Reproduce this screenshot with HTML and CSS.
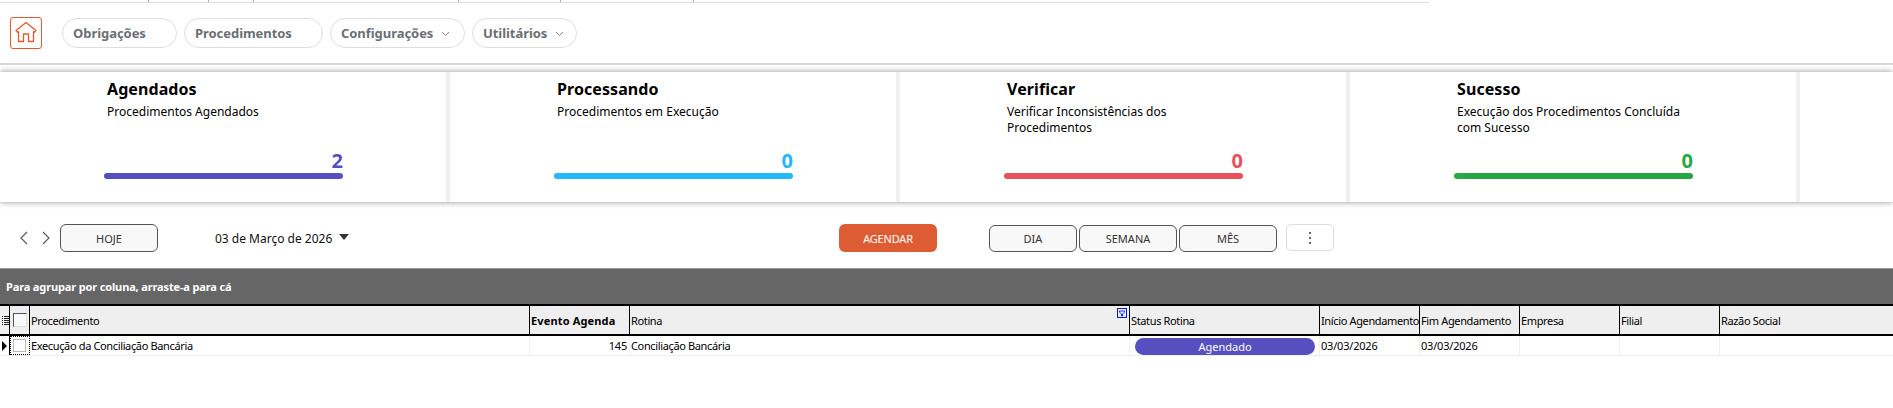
FILE: index.html
```html
<!DOCTYPE html>
<html lang="pt-BR">
<head>
<meta charset="utf-8">
<title>Procedimentos</title>
<link rel="stylesheet" href="styles.css">
</head>
<body>
<div class="page">
  <svg class="top-strip" width="1429" height="3" viewBox="0 0 1429 3">
    <path d="M0 2.5H1429" stroke="#dcdcdc"/>
    <path d="M148.5 0V2M208.5 0V2M253.5 0V2M458.5 0V2M560.5 0V2M693.5 0V2" stroke="#aaa"/>
  </svg>
  <header class="nav">
    <a class="home" href="#" aria-label="Início">
      <svg width="30" height="30" viewBox="0 0 30 30" fill="none" stroke="#e8582c" stroke-width="1.3" stroke-linejoin="round">
        <path d="M5 12.5 15 4.5l10 8-1.6 1.8-.9-.7V23.5h-5V16h-5v7.5h-5V13.6l-.9.7z"/>
      </svg>
    </a>
    <nav class="menu">
      <a class="pill pill-obr" href="#">Obrigações</a>
      <a class="pill pill-proc" href="#">Procedimentos</a>
      <a class="pill pill-conf" href="#">Configurações
        <svg class="caret" width="9" height="6" viewBox="0 0 9 6"><path d="M1 1l3.5 3.5L8 1" fill="none" stroke="#8a8a8a"/></svg></a>
      <a class="pill pill-util" href="#">Utilitários
        <svg class="caret" width="9" height="6" viewBox="0 0 9 6"><path d="M1 1l3.5 3.5L8 1" fill="none" stroke="#8a8a8a"/></svg></a>
    </nav>
  </header>

  <section class="cards">
    <article class="card">
      <div class="card-body">
        <h2 class="card-title">Agendados</h2>
        <p class="card-sub">Procedimentos Agendados</p>
        <div class="card-num num-purple">2</div>
        <div class="card-bar bar-purple"></div>
      </div>
    </article>
    <article class="card">
      <div class="card-body">
        <h2 class="card-title">Processando</h2>
        <p class="card-sub">Procedimentos em Execução</p>
        <div class="card-num num-blue">0</div>
        <div class="card-bar bar-blue"></div>
      </div>
    </article>
    <article class="card">
      <div class="card-body">
        <h2 class="card-title">Verificar</h2>
        <p class="card-sub">Verificar Inconsistências dos Procedimentos</p>
        <div class="card-num num-red">0</div>
        <div class="card-bar bar-red"></div>
      </div>
    </article>
    <article class="card">
      <div class="card-body">
        <h2 class="card-title">Sucesso</h2>
        <p class="card-sub">Execução dos Procedimentos Concluída com Sucesso</p>
        <div class="card-num num-green">0</div>
        <div class="card-bar bar-green"></div>
      </div>
    </article>
    <article class="card card-empty"></article>
  </section>

  <section class="toolbar">
    <div class="tb-left">
      <svg class="chev" width="10" height="14" viewBox="0 0 10 14"><path d="M8 1 2 7l6 6" fill="none" stroke="#555" stroke-width="1.1"/></svg>
      <svg class="chev chev-next" width="10" height="14" viewBox="0 0 10 14"><path d="M2 1l6 6-6 6" fill="none" stroke="#555" stroke-width="1.1"/></svg>
      <button class="btn btn-today">HOJE</button>
      <span class="date">03 de Março de 2026</span>
      <span class="date-arrow"></span>
    </div>
    <button class="btn-primary">AGENDAR</button>
    <div class="views">
      <button class="btn btn-dia">DIA</button>
      <button class="btn btn-view">SEMANA</button>
      <button class="btn btn-view">MÊS</button>
    </div>
    <button class="btn-more" aria-label="Mais"><i></i><i></i><i></i></button>
  </section>

  <section class="grid">
    <div class="group-band">Para agrupar por coluna, arraste-a para cá</div>
    <div class="row head">
      <div class="cell c-ind">
        <svg width="7" height="9" viewBox="0 0 7 9"><path d="M0 .5h1M2 .5h5M0 2.5h1M2 2.5h5M0 4.5h1M2 4.5h5M0 6.5h1M2 6.5h5M0 8.5h1M2 8.5h5" stroke="#222"/></svg>
      </div>
      <div class="cell c-chk"><span class="hcheck"></span></div>
      <div class="cell">Procedimento</div>
      <div class="cell strong">Evento Agenda</div>
      <div class="cell c-filter">Rotina
        <svg class="filter" width="10" height="10" viewBox="0 0 10 10"><rect x=".5" y=".5" width="9" height="9" fill="#e8ecff" stroke="#0018e8"/><path d="M2.5 3h5v1L5.5 6v2h-1V6l-2-2z" fill="#fff" stroke="#0018e8" stroke-width=".9"/></svg>
      </div>
      <div class="cell">Status Rotina</div>
      <div class="cell">Início Agendamento</div>
      <div class="cell">Fim Agendamento</div>
      <div class="cell">Empresa</div>
      <div class="cell">Filial</div>
      <div class="cell">Razão Social</div>
    </div>
    <div class="row data">
      <div class="cell c-ind"><span class="pointer"></span></div>
      <div class="cell c-chk focus"><span class="rcheck"></span></div>
      <div class="cell">Execução da Conciliação Bancária</div>
      <div class="cell num">145</div>
      <div class="cell">Conciliação Bancária</div>
      <div class="cell c-status"><span class="status">Agendado</span></div>
      <div class="cell c-date">03/03/2026</div>
      <div class="cell c-date">03/03/2026</div>
      <div class="cell"></div>
      <div class="cell"></div>
      <div class="cell"></div>
    </div>
  </section>
</div>
</body>
</html>
```
FILE: styles.css
```css
* { box-sizing: border-box; }
html, body { margin: 0; padding: 0; background: #fff; }
body { width: 1893px; height: 408px; overflow: hidden; font-family: "Noto Sans", "Open Sans", sans-serif; color: #000; }
.page { width: 1893px; }
.top-strip { display: block; }

.nav { height: 62px; border-bottom: 2px solid #d8d8d8; display: flex; padding: 14px 0 0 10px; }
.home { width: 32px; height: 32px; border: 1px solid #e8582c; border-radius: 3px; display: flex; align-items: center; justify-content: center; }
.menu { display: flex; gap: 7px; margin: 1px 0 0 20px; }
.pill { height: 30px; border: 1px solid #dedede; border-radius: 15px; display: flex; align-items: center; padding-left: 10px; font-size: 13px; font-weight: 700; letter-spacing: -.05px; color: #6b6f75; text-decoration: none; }
.pill-obr { width: 115px; }
.pill-proc { width: 139px; }
.pill-conf { width: 135px; }
.pill-util { width: 105px; }
.caret { margin-left: 8px; margin-top: 1px; }

.cards { display: flex; height: 130px; margin-top: 7px; background: #fff; box-shadow: 0 0 6px rgba(0,0,0,.45); }
.card { width: 450px; flex: none; border-right: 4px solid #f0f0f0; padding-left: 104px; }
.card-empty { flex: 1; border-right: 0; }
.card-body { width: 239px; height: 100%; display: flex; flex-direction: column; }
.card-title { margin: 7px 0 0 3px; font-size: 16px; line-height: 20px; font-weight: 700; letter-spacing: .08px; }
.card-sub { margin: 5px 0 0 3px; height: 32px; font-size: 12px; line-height: 16px; width: 230px; }
.card-num { margin-top: 13px; text-align: right; font-size: 20px; line-height: 24px; font-weight: 700; }
.card-bar { height: 6px; border-radius: 3px; margin-top: 0; }
.num-purple { color: #574fc0; } .bar-purple { background: #574fc0; }
.num-blue { color: #22b8fa; } .bar-blue { background: #22b8fa; }
.num-red { color: #e9505c; } .bar-red { background: #e9505c; }
.num-green { color: #28a745; } .bar-green { background: #28a745; }

.toolbar { height: 66px; display: flex; align-items: flex-start; padding-top: 22px; font-size: 11px; }
.tb-left { width: 839px; flex: none; display: flex; align-items: center; height: 28px; padding-left: 19px; }
.chev-next { margin-left: 12px; }
.btn { height: 27px; border: 1px solid #555; border-radius: 6px; background: #f8f8f8; font: inherit; font-size: 11px; color: #333; padding: 0; }
.btn-today { width: 98px; height: 28px; margin-left: 9px; }
.date { margin-left: 57px; font-size: 12px; color: #111; }
.date-arrow { margin: 0 0 2px 7px; width: 0; height: 0; border-left: 5px solid transparent; border-right: 5px solid transparent; border-top: 6px solid #333; }
.btn-primary { width: 98px; height: 28px; border: 0; border-radius: 6px; background: #de5c33; color: #fff; font: inherit; font-size: 11px; letter-spacing: -.2px; padding: 0; }
.views { display: flex; gap: 2px; margin: 1px 0 0 52px; }
.btn-dia { width: 88px; }
.btn-view { width: 98px; }
.btn-more { width: 48px; height: 27px; margin-left: 9px; border: 1px solid #ddd; border-radius: 5px; background: #fff; display: flex; flex-direction: column; align-items: center; justify-content: center; gap: 3px; padding: 0; }
.btn-more i { width: 2px; height: 2px; background: #666; display: block; }

.grid { font-size: 11px; letter-spacing: -.36px; }
.group-band { height: 36px; background: #666; border-top: 1px solid #999; padding: 10px 0 0 6px; color: #fff; font-size: 11px; line-height: 16px; font-weight: 700; letter-spacing: -.14px; }
.row { display: grid; grid-template-columns: 10px 20px 500px 100px 500px 190px 100px 100px 100px 100px 174px; }
.head { height: 32px; background: #efefef; border-top: 2px solid #000; border-bottom: 2px solid #000; }
.data { height: 20px; border-bottom: 1px solid #eee; }
.cell { padding-left: 1px; white-space: nowrap; overflow: hidden; line-height: 29px; border-right: 1px solid #000; position: relative; }
.head .cell:last-child { border-right: 0; }
.data .cell { border-right: 1px solid #f0f0f0; line-height: 19px; }
.data .c-ind { border-right: 1px solid #000; }
.strong { font-weight: 700; letter-spacing: .15px; }
.num, .c-date { letter-spacing: -.2px; }
.num { text-align: right; padding-right: 2px; }
.c-ind { padding: 0 0 0 2px; display: flex; align-items: center; }
.c-chk { padding: 0; display: flex; align-items: center; justify-content: center; }
.hcheck { width: 14px; height: 14px; background: #f8f8f8; border: 1px solid; border-color: #555 #ddd #ddd #555; }
.rcheck { width: 13px; height: 13px; border: 1px solid #bbb; background: #fff; }
.focus { outline: 1px dotted #000; outline-offset: -1px; }
.pointer { width: 0; height: 0; border-left: 5px solid #000; border-top: 5px solid transparent; border-bottom: 5px solid transparent; }
.filter { position: absolute; right: 2px; top: 2px; }
.c-status { padding: 2px 0 0 5px; line-height: 0; }
.status { display: block; width: 180px; height: 17px; border-radius: 9px; background: #574fc0; color: #fff; text-align: center; font-size: 11px; letter-spacing: 0; line-height: 17px; }
```
